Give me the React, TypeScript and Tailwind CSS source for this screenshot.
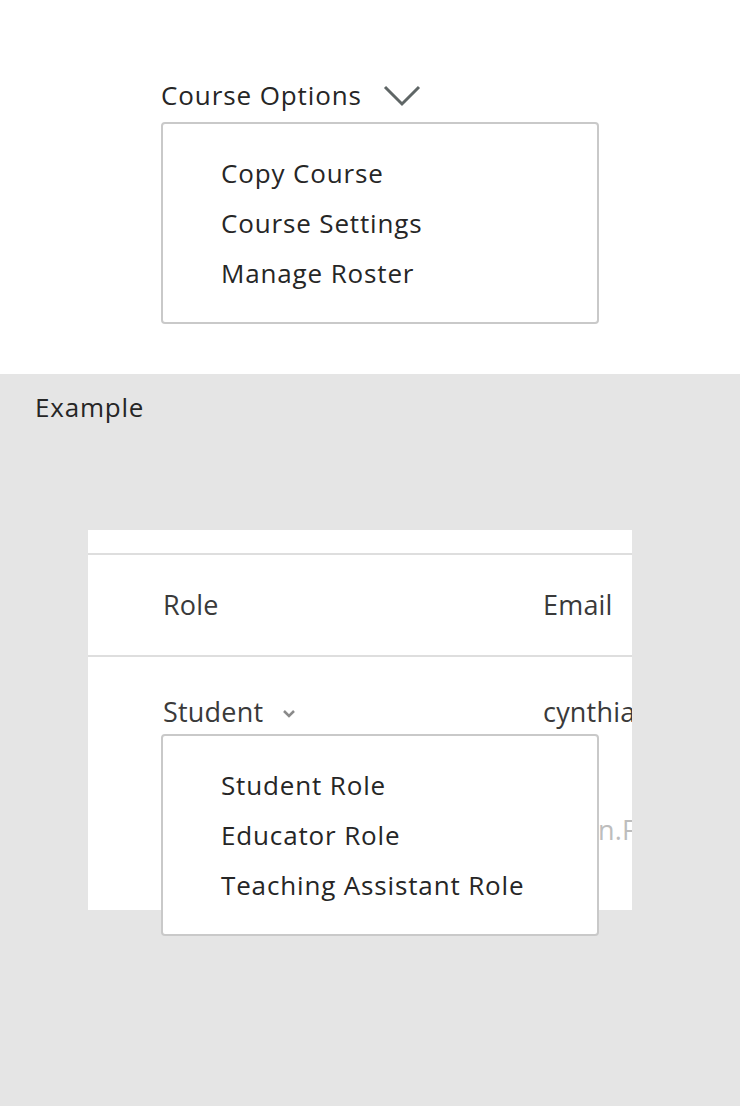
import React from "react";

function Menu({ items }: { items: string[] }) {
  return (
    <div className="w-[438px] h-[202px] bg-white border-2 border-[#c9c9c9] rounded-[4px] pt-[24px] pl-[58px]">
      {items.map((t) => (
        <div key={t} className="h-[50px] leading-[50px] text-[26px] tracking-[0.85px] text-[#262626] whitespace-nowrap">
          {t}
        </div>
      ))}
    </div>
  );
}

export default function App() {
  return (
    <div className="w-[740px] h-[1106px] font-['Open_Sans',sans-serif] text-[#262626]">
      <div className="h-[374px] bg-white pt-[77px] pl-[161px]">
        <div className="flex items-center h-[36px]">
          <span className="text-[26px] leading-[36px] tracking-[0.9px]">Course Options</span>
          <svg className="ml-[21px] mt-[2px]" width="38" height="22" viewBox="0 0 38 22" fill="none">
            <path d="M2 2 L19 19 L36 2" stroke="#5f6666" strokeWidth="3" />
          </svg>
        </div>
        <div className="mt-[9px]">
          <Menu items={["Copy Course", "Course Settings", "Manage Roster"]} />
        </div>
      </div>
      <div className="h-[732px] bg-[#e5e5e5] pt-[15px]">
        <div className="pl-[35px] text-[26px] leading-[36px] tracking-[0.8px]">Example</div>
        <div className="relative ml-[88px] mt-[105px] w-[544px]">
          <div className="h-[380px] bg-white overflow-hidden text-[27px] tracking-[0.2px] text-[#3a3a3a]">
            <div className="h-[23px]" />
            <div className="h-[102px] border-t-2 border-[#dedede] flex items-center pl-[75px]">
              <div className="w-[380px] shrink-0">Role</div>
              <div className="whitespace-nowrap">Email</div>
            </div>
            <div className="border-t-2 border-[#dedede] flex pl-[75px] pt-[37px]">
              <div className="w-[380px] shrink-0 flex items-center h-[36px]">
                <span className="leading-[36px]">Student</span>
                <svg className="ml-[19px] mt-[2px]" width="14" height="9" viewBox="0 0 14 9" fill="none">
                  <path d="M2 2 L7 7 L12 2" stroke="#8a8a8a" strokeWidth="2.5" />
                </svg>
              </div>
              <div className="whitespace-nowrap">
                <div className="leading-[36px]">cynthia</div>
                <div className="leading-[36px] mt-[82px] pl-[55px] text-[#bdbdbd]">n.Fox</div>
              </div>
            </div>
          </div>
          <div className="absolute left-[73px] top-[204px]">
            <Menu items={["Student Role", "Educator Role", "Teaching Assistant Role"]} />
          </div>
        </div>
      </div>
    </div>
  );
}
